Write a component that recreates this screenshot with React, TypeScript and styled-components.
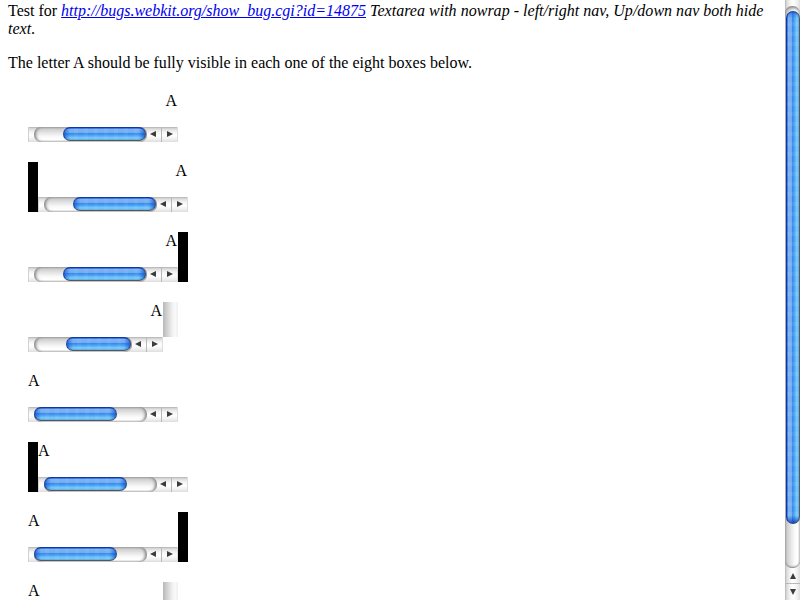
import React from "react";
import styled, { createGlobalStyle } from "styled-components";

const GlobalStyle = createGlobalStyle`
  * { box-sizing: border-box; }
  html, body { margin: 0; height: 600px; overflow: hidden; background: #fff; }
`;

const Window = styled.div`
  display: flex;
  width: 800px;
  height: 600px;
  overflow: hidden;
  background: #fff;
  color: #000;
  font: 16px/18px "Liberation Serif", "Times New Roman", serif;
`;

const Page = styled.main`
  flex: 1;
  height: 600px;
  overflow: hidden;
  padding: 2px 8px 0;
`;

const Intro = styled.p`
  margin: 0 0 16px;
  height: 36px;
  white-space: nowrap;
`;

const Text = styled.span<{ $spacing: number }>`
  letter-spacing: ${(p) => p.$spacing}px;
`;

const BugLink = styled.a`
  color: #0000ee;
  text-decoration: underline;
  letter-spacing: 0;
`;

const Statement = styled.p`
  margin: 0 0 20px;
  height: 18px;
`;

const BoxList = styled.div`
  display: flex;
  flex-direction: column;
  gap: 20px;
  padding-left: 20px;
`;

const Box = styled.div`
  display: flex;
  height: 50px;
  flex: none;
`;

const BlackEdge = styled.div`
  width: 10px;
  height: 50px;
  background: #000;
`;

const Area = styled.div<{ $width: number }>`
  display: flex;
  flex-direction: column;
  justify-content: space-between;
  width: ${(p) => p.$width}px;
  height: 50px;
`;

const Letter = styled.div<{ $align: "left" | "right" }>`
  text-align: ${(p) => p.$align};
  height: 18px;
  padding-right: 1px;
`;

const SideTrack = styled.div`
  width: 15px;
  height: 35px;
  background: linear-gradient(90deg, #b8b8b8 0, #cfcfcf 25%, #ededed 58%, #fafafa 80%, #efefef 100%);
`;

const HBar = styled.div`
  display: flex;
  height: 15px;
  border-left: 1px solid #d2d2d2;
  background: linear-gradient(#b0b0b0 0, #dcdcdc 12%, #f5f5f5 35%, #fff 55%, #f1f1f1 80%, #dedede 100%);
`;

const HTrack = styled.div<{ $pad: number }>`
  flex: 1;
  display: flex;
  margin-left: 5px;
  padding: 0 1px 0 ${(p) => p.$pad}px;
  border-radius: 7px;
  background: linear-gradient(#a9a9a9 0, #cecece 14%, #e2e2e2 35%, #fafafa 65%, #fff 85%, #cfcfcf 100%);
  box-shadow: inset 3px 0 3px -1px #8a8a8a, inset -3px 0 3px -1px #8a8a8a;
`;

const HThumb = styled.div<{ $width: number }>`
  width: ${(p) => p.$width}px;
  height: 14px;
  border-radius: 7px;
  border: 1px solid;
  border-color: #0d38a8 #304c80 #4d5967 #1646a4;
  background:
    linear-gradient(90deg, #0646cbaa 0, transparent 6px, transparent calc(100% - 6px), #0646cbaa 100%),
    repeating-linear-gradient(90deg, #ffffff0d 0 4px, transparent 4px 10px),
    linear-gradient(#1c59d2 0, #7eb2f2 12%, #72acef 38%, #398ae9 46%, #489ff5 60%, #79cdff 83%, #62a5d4 100%);
`;

const HButton = styled.div<{ $width: number; $divider?: boolean }>`
  display: flex;
  align-items: center;
  width: ${(p) => p.$width}px;
  height: 15px;
  padding-bottom: 1px;
  border-left: ${(p) => (p.$divider ? "1px solid #b9b9b9" : "0")};
  border-right: ${(p) => (p.$divider ? "1px solid #ddd" : "0")};
`;

const VBar = styled.aside`
  display: flex;
  flex-direction: column;
  width: 15px;
  height: 600px;
  background: linear-gradient(90deg, #b5b5b5 0, #dcdcdc 12%, #f5f5f5 35%, #fff 55%, #f1f1f1 80%, #dedede 100%);
`;

const VTrack = styled.div`
  height: 562px;
  margin-top: 6px;
  padding: 5px 0 0 1px;
  border-radius: 7px;
  background: linear-gradient(90deg, #a9a9a9 0, #cecece 14%, #e2e2e2 35%, #fafafa 65%, #fff 85%, #cfcfcf 100%);
  box-shadow: inset 0 3px 3px -1px #888, inset 0 -2px 2px -1px #777;
`;

const VThumb = styled.div`
  width: 14px;
  height: 513px;
  border-radius: 7px;
  border: 1px solid;
  border-color: #1646a4 #4d5967 #304c80 #0d38a8;
  background:
    linear-gradient(#0646cb99 0, transparent 6px, transparent calc(100% - 7px), #0636b4cc 100%),
    repeating-linear-gradient(#ffffff12 0 4px, transparent 4px 10px),
    linear-gradient(90deg, #1c59d2 0, #7eb2f2 12%, #72acef 38%, #398ae9 46%, #489ff5 60%, #79cdff 83%, #62a5d4 100%);
`;

const VButton = styled.div<{ $height: number; $divider?: boolean }>`
  display: flex;
  justify-content: center;
  align-items: center;
  height: ${(p) => p.$height}px;
  border-top: ${(p) => (p.$divider ? "1px solid #b9b9b9" : "0")};
`;

const arrows = {
  left: "M6 0V6L0 3Z",
  right: "M0 0V6L6 3Z",
  up: "M0 6H6L3 0Z",
  down: "M0 0H6L3 6Z",
};

const ArrowIcon = styled.svg<{ $offset?: number }>`
  display: block;
  margin-left: ${(p) => p.$offset ?? 0}px;
`;

function Arrow({ dir, offset }: { dir: keyof typeof arrows; offset?: number }) {
  return (
    <ArrowIcon $offset={offset} width="6" height="6" viewBox="0 0 6 6">
      <path d={arrows[dir]} fill="#3c3c3c" />
    </ArrowIcon>
  );
}

function HorizontalScrollbar({ pad, thumb }: { pad: number; thumb: number }) {
  return (
    <HBar>
      <HTrack $pad={pad}>
        <HThumb $width={thumb} />
      </HTrack>
      <HButton $width={14}><Arrow dir="left" offset={3} /></HButton>
      <HButton $width={17} $divider><Arrow dir="right" offset={5} /></HButton>
    </HBar>
  );
}

type BoxSpec = { align: "left" | "right"; edge?: "left" | "right" | "scroll" };

const boxes: BoxSpec[] = (["right", "left"] as const).flatMap((align) => [
  { align },
  { align, edge: "left" as const },
  { align, edge: "right" as const },
  { align, edge: "scroll" as const },
]);

function TextBox({ align, edge }: BoxSpec) {
  const narrow = edge === "scroll";
  return (
    <Box>
      {edge === "left" && <BlackEdge />}
      <Area $width={narrow ? 135 : 150}>
        <Letter $align={align}>A</Letter>
        <HorizontalScrollbar pad={align === "left" ? 0 : narrow ? 32 : 29} thumb={narrow ? 65 : 83} />
      </Area>
      {edge === "right" && <BlackEdge />}
      {narrow && <SideTrack />}
    </Box>
  );
}

export default function App() {
  return (
    <>
      <GlobalStyle />
      <Window>
        <Page>
          <Intro>
            <Text $spacing={0}>Test for </Text>
            <i>
              <BugLink href="http://bugs.webkit.org/show_bug.cgi?id=14875">
                http://bugs.webkit.org/show_bug.cgi?id=14875
              </BugLink>
              <Text $spacing={0.02}> Textarea with nowrap - left/right nav, Up/down nav both hide</Text>
              <br />
              text
            </i>
            .
          </Intro>
          <Statement>
            <Text $spacing={0.01}>The letter A should be fully visible in each one of the eight boxes below.</Text>
          </Statement>
          <BoxList>
            {boxes.map((box, i) => (
              <TextBox key={i} {...box} />
            ))}
          </BoxList>
        </Page>
        <VBar>
          <VTrack>
            <VThumb />
          </VTrack>
          <VButton $height={15}><Arrow dir="up" /></VButton>
          <VButton $height={17} $divider><Arrow dir="down" /></VButton>
        </VBar>
      </Window>
    </>
  );
}
